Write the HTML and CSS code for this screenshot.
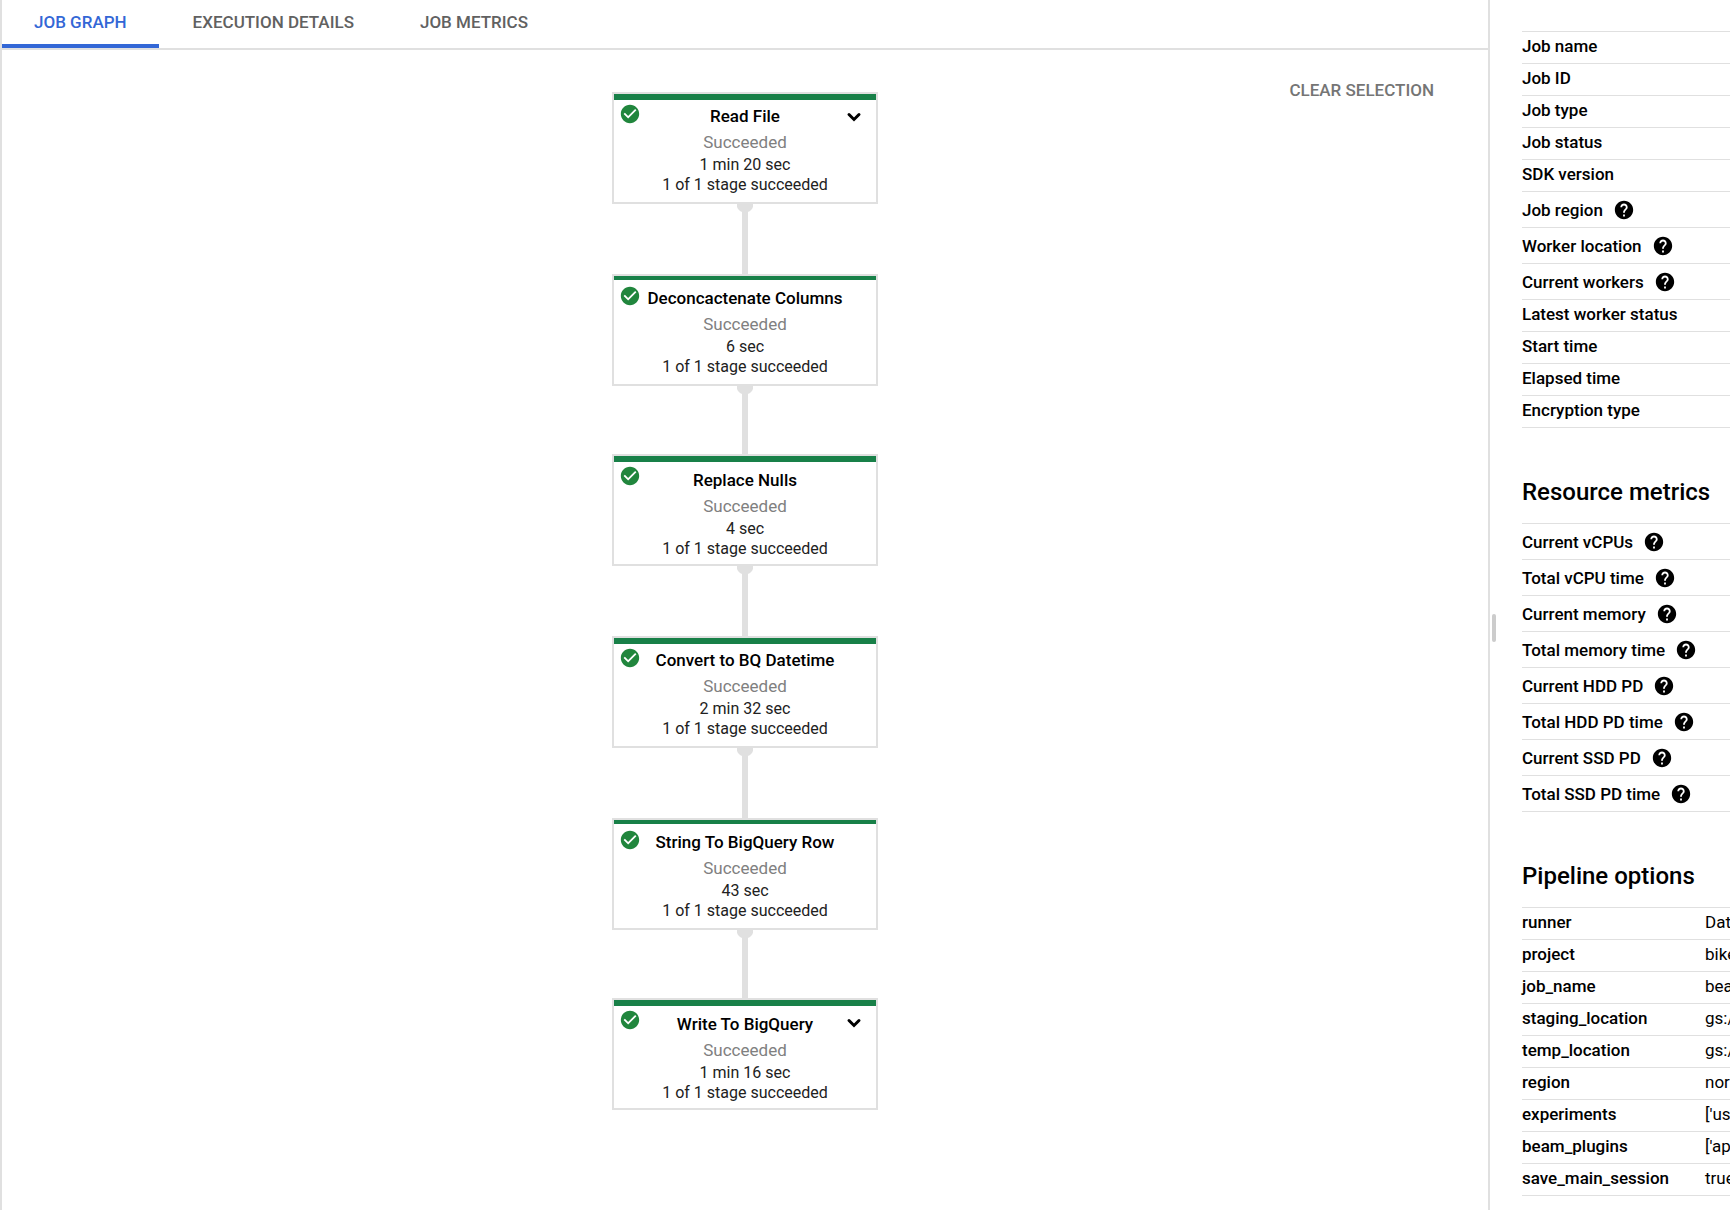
FILE: index.html
```html
<!DOCTYPE html>
<html lang="en">
<head>
<meta charset="utf-8">
<title>Dataflow job graph</title>
<link rel="stylesheet" href="styles.css">
</head>
<body>
<svg class="sprite" aria-hidden="true">
  <symbol id="help" viewBox="0 0 24 24"><path d="M12 2C6.48 2 2 6.48 2 12s4.480 10 10 10 10-4.480 10-10S17.520 2 12 2zm1 17h-2v-2h2v2zm2.070-7.750l-.9.920C13.450 12.900 13 13.500 13 15h-2v-.5c0-1.100.450-2.100 1.170-2.830l1.240-1.260c.370-.360.590-.860.590-1.410 0-1.100-.9-2-2-2s-2 .9-2 2H8c0-2.210 1.790-4 4-4s4 1.790 4 4c0 .880-.360 1.680-.930 2.250z" stroke="#fff" stroke-width="0"/></symbol>
  <symbol id="check" viewBox="0 0 24 24"><path d="M12 2C6.480 2 2 6.480 2 12s4.480 10 10 10 10-4.480 10-10S17.520 2 12 2zm-2 15l-5-5 1.410-1.410L10 14.170l7.590-7.590L19 8l-9 9z"/></symbol>
  <symbol id="chevron" viewBox="0 0 16 16"><path d="M3 5.500L8 10.500l5-5" fill="none" stroke="currentColor" stroke-width="3" stroke-linecap="round"/></symbol>
</svg>
<div class="app">
  <main class="workspace">
    <div class="tabs" role="tablist">
      <button class="tab tab-active" role="tab" aria-selected="true">JOB GRAPH</button>
      <button class="tab" role="tab" aria-selected="false">EXECUTION DETAILS</button>
      <button class="tab" role="tab" aria-selected="false">JOB METRICS</button>
    </div>
    <section class="canvas">
      <button class="clear">CLEAR SELECTION</button>
      <div class="graph">
        <article class="node">
          <svg class="node-check"><use href="#check"/></svg>
          <h3 class="node-title">Read File</h3>
          <button class="node-expand" aria-label="Expand Read File"><svg class="chevron"><use href="#chevron"/></svg></button>
          <p class="node-status">Succeeded</p>
          <p class="node-line">1 min 20 sec</p>
          <p class="node-line">1 of 1 stage succeeded</p>
        </article>
        <div class="edge"></div>
        <article class="node node-thin">
          <svg class="node-check"><use href="#check"/></svg>
          <h3 class="node-title">Deconcactenate Columns</h3>
          <p class="node-status">Succeeded</p>
          <p class="node-line">6 sec</p>
          <p class="node-line">1 of 1 stage succeeded</p>
        </article>
        <div class="edge edge-short"></div>
        <article class="node node-low">
          <svg class="node-check"><use href="#check"/></svg>
          <h3 class="node-title">Replace Nulls</h3>
          <p class="node-status">Succeeded</p>
          <p class="node-line">4 sec</p>
          <p class="node-line">1 of 1 stage succeeded</p>
        </article>
        <div class="edge"></div>
        <article class="node">
          <svg class="node-check"><use href="#check"/></svg>
          <h3 class="node-title">Convert to BQ Datetime</h3>
          <p class="node-status">Succeeded</p>
          <p class="node-line">2 min 32 sec</p>
          <p class="node-line">1 of 1 stage succeeded</p>
        </article>
        <div class="edge"></div>
        <article class="node node-thin">
          <svg class="node-check"><use href="#check"/></svg>
          <h3 class="node-title">String To BigQuery Row</h3>
          <p class="node-status">Succeeded</p>
          <p class="node-line">43 sec</p>
          <p class="node-line">1 of 1 stage succeeded</p>
        </article>
        <div class="edge edge-short"></div>
        <article class="node node-low">
          <svg class="node-check"><use href="#check"/></svg>
          <h3 class="node-title">Write To BigQuery</h3>
          <button class="node-expand" aria-label="Expand Write To BigQuery"><svg class="chevron"><use href="#chevron"/></svg></button>
          <p class="node-status">Succeeded</p>
          <p class="node-line">1 min 16 sec</p>
          <p class="node-line">1 of 1 stage succeeded</p>
        </article>
      </div>
    </section>
  </main>
  <aside class="panel">
    <div class="handle"></div>
    <table class="facts">
      <tr><th scope="row">Job name</th><td></td></tr>
      <tr><th scope="row">Job ID</th><td></td></tr>
      <tr><th scope="row">Job type</th><td></td></tr>
      <tr><th scope="row">Job status</th><td></td></tr>
      <tr><th scope="row">SDK version</th><td></td></tr>
      <tr class="tall"><th scope="row"><span class="term">Job region <button class="help" aria-label="Help"><svg><use href="#help"/></svg></button></span></th><td></td></tr>
      <tr class="tall"><th scope="row"><span class="term">Worker location <button class="help" aria-label="Help"><svg><use href="#help"/></svg></button></span></th><td></td></tr>
      <tr class="tall"><th scope="row"><span class="term">Current workers <button class="help" aria-label="Help"><svg><use href="#help"/></svg></button></span></th><td></td></tr>
      <tr><th scope="row">Latest worker status</th><td></td></tr>
      <tr><th scope="row">Start time</th><td></td></tr>
      <tr><th scope="row">Elapsed time</th><td></td></tr>
      <tr><th scope="row">Encryption type</th><td></td></tr>
    </table>
    <h2 class="heading">Resource metrics</h2>
    <table class="facts">
      <tr class="tall"><th scope="row"><span class="term">Current vCPUs <button class="help" aria-label="Help"><svg><use href="#help"/></svg></button></span></th><td></td></tr>
      <tr class="tall"><th scope="row"><span class="term">Total vCPU time <button class="help" aria-label="Help"><svg><use href="#help"/></svg></button></span></th><td></td></tr>
      <tr class="tall"><th scope="row"><span class="term">Current memory <button class="help" aria-label="Help"><svg><use href="#help"/></svg></button></span></th><td></td></tr>
      <tr class="tall"><th scope="row"><span class="term">Total memory time <button class="help" aria-label="Help"><svg><use href="#help"/></svg></button></span></th><td></td></tr>
      <tr class="tall"><th scope="row"><span class="term">Current HDD PD <button class="help" aria-label="Help"><svg><use href="#help"/></svg></button></span></th><td></td></tr>
      <tr class="tall"><th scope="row"><span class="term">Total HDD PD time <button class="help" aria-label="Help"><svg><use href="#help"/></svg></button></span></th><td></td></tr>
      <tr class="tall"><th scope="row"><span class="term">Current SSD PD <button class="help" aria-label="Help"><svg><use href="#help"/></svg></button></span></th><td></td></tr>
      <tr class="tall"><th scope="row"><span class="term">Total SSD PD time <button class="help" aria-label="Help"><svg><use href="#help"/></svg></button></span></th><td></td></tr>
    </table>
    <h2 class="heading">Pipeline options</h2>
    <table class="facts">
      <tr><th scope="row">runner</th><td>Dat</td></tr>
      <tr><th scope="row">project</th><td>bike</td></tr>
      <tr><th scope="row">job_name</th><td>bea</td></tr>
      <tr><th scope="row">staging_location</th><td>gs:/</td></tr>
      <tr><th scope="row">temp_location</th><td>gs:/</td></tr>
      <tr><th scope="row">region</th><td>nor</td></tr>
      <tr><th scope="row">experiments</th><td>['us</td></tr>
      <tr><th scope="row">beam_plugins</th><td>['ap</td></tr>
      <tr><th scope="row">save_main_session</th><td>true</td></tr>
    </table>
  </aside>
</div>
</body>
</html>
```
FILE: styles.css
```css
* { box-sizing: border-box; }

body {
  margin: 0;
  background: #fff;
  color: #000;
  font: 17px/24px Roboto, "Liberation Sans", sans-serif;
}

button {
  margin: 0;
  padding: 0;
  border: 0;
  background: none;
  color: inherit;
  font: inherit;
}

h2, h3, p { margin: 0; }

.sprite { position: absolute; width: 0; height: 0; }

.app {
  display: flex;
  min-height: 100vh;
  overflow: hidden;
}

.workspace {
  flex: 1;
  min-width: 0;
  border-left: 2px solid #e0e0e0;
}

.tabs {
  display: flex;
  gap: 2px;
  height: 50px;
  border-bottom: 2px solid #e0e0e0;
}

.tab {
  padding: 0 32px;
  border-bottom: 4px solid transparent;
  color: #616161;
  font-weight: 500;
}

.tab-active {
  border-color: #3367d6;
  color: #3367d6;
}

.canvas {
  position: relative;
  padding: 42px 0 96px;
}

.clear {
  position: absolute;
  top: 28px;
  right: 54px;
  color: #757575;
  font-weight: 500;
}

.graph {
  display: flex;
  flex-direction: column;
  align-items: center;
}

.node {
  position: relative;
  width: 266px;
  height: 112px;
  padding-top: 10px;
  border: 2px solid #e0e0e0;
  text-align: center;
}

.node::before {
  content: "";
  position: absolute;
  inset: 0 0 auto;
  height: 6px;
  background: #188048;
}

.node-thin::before { height: 4px; }

.node-low { padding-top: 12px; }

.node-check {
  position: absolute;
  top: 9px;
  left: 5px;
  width: 22px;
  height: 22px;
  fill: #21863d;
}

.node-expand {
  position: absolute;
  top: 15px;
  right: 14px;
  width: 16px;
  height: 16px;
}

.chevron { display: block; width: 16px; height: 16px; }

.node-title {
  font-size: 17px;
  font-weight: 500;
}

.node-status {
  margin: 2px 0 1px;
  color: #808080;
}

.node-line {
  color: #212121;
  font-size: 16px;
  line-height: 20px;
}

.edge {
  width: 16px;
  height: 70px;
  background:
    radial-gradient(circle at 8px 0, #e0e0e0 8px, transparent 9px) top / 16px 9px no-repeat,
    linear-gradient(#e0e0e0, #e0e0e0) center / 6px 100% no-repeat;
}

.edge-short { height: 68px; }

.panel {
  position: relative;
  flex: 0 0 242px;
  padding: 31px 0 14px 32px;
  border-left: 2px solid #e0e0e0;
  overflow: hidden;
}

.handle {
  position: absolute;
  top: 614px;
  left: 2px;
  width: 4px;
  height: 28px;
  border-radius: 2px;
  background: #ccc;
}

.facts {
  width: 600px;
  border-collapse: separate;
  border-spacing: 0;
  border-top: 1px solid #e0e0e0;
  table-layout: fixed;
}

.facts th,
.facts td {
  height: 32px;
  padding: 0 0 4px;
  border-bottom: 1px solid #e0e0e0;
  text-align: left;
}

.facts th {
  width: 183px;
  font-weight: 500;
}

.facts .tall th {
  height: 36px;
  padding: 0;
}

.term {
  display: flex;
  align-items: center;
  gap: 10px;
}

.help,
.help svg {
  display: block;
  width: 22px;
  height: 22px;
}

.heading {
  margin: 48px 0 15px;
  font-size: 24px;
  font-weight: 500;
  line-height: 32px;
}
```
